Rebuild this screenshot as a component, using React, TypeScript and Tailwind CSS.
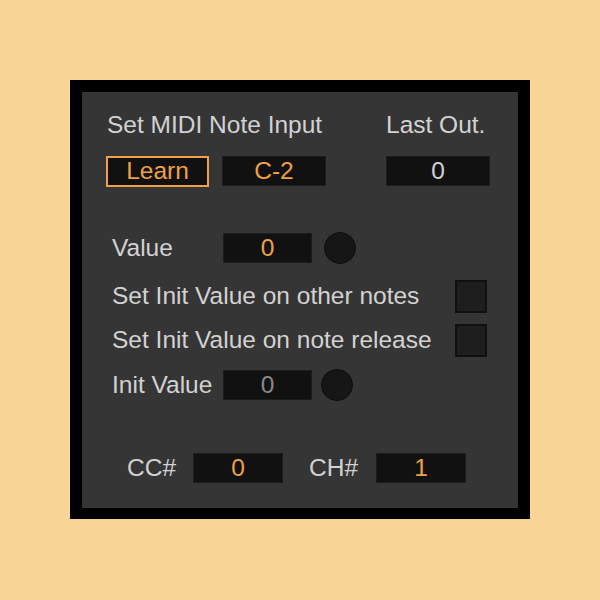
import React from "react";

const NumBox = ({ value, className, textClass }: { value: string; className?: string; textClass?: string }) => (
  <div
    className={`flex items-center justify-center bg-[#111111] border border-[#1c1c1c] ${className ?? ""}`}
  >
    <span className={textClass ?? "text-[#f0a045]"}>{value}</span>
  </div>
);

const Dot = () => <div className="w-[32px] h-[32px] rounded-full bg-[#161616] border border-[#0c0c0c]"></div>;

const Check = () => <div className="w-[32px] h-[33px] bg-[#1e1e1e] border-2 border-[#101010]"></div>;

export default function App() {
  return (
    <div
      className="w-[600px] h-[600px] bg-[#f8d597] pt-[80px] pl-[70px]"
      style={{ fontFamily: '"Liberation Sans", Arial, sans-serif' }}
    >
      <div className="w-[460px] h-[439px] bg-black p-[12px] pb-[11px]">
        <div className="w-full h-full bg-[#353535] text-[#d2d2d2] text-[24.5px] leading-none">
          {/* Header row */}
          <div className="flex pt-[21px] pl-[25px] h-[64px]">
            <div className="w-[279px]">Set MIDI Note Input</div>
            <div>Last Out.</div>
          </div>
          <div className="flex items-center pl-[24px] h-[30px]">
            <div className="w-[103px] h-[31px] flex items-center justify-center border-2 border-[#f0a045] bg-[#111111] text-[#f0a045]">
              Learn
            </div>
            <NumBox value="C-2" className="ml-[13px] w-[104px] h-[30px]" />
            <NumBox value="0" className="ml-[60px] w-[104px] h-[30px]" textClass="text-[#d2d2d2]" />
          </div>

          {/* Value */}
          <div className="flex items-center pl-[30px] mt-[46px] h-[32px]">
            <div className="w-[111px]">Value</div>
            <NumBox value="0" className="w-[89px] h-[30px]" />
            <div className="ml-[12px]">
              <Dot />
            </div>
          </div>

          <div className="flex items-center justify-between pl-[30px] pr-[31px] mt-[15px] h-[34px]">
            <div>Set Init Value on other notes</div>
            <Check />
          </div>
          <div className="flex items-center justify-between pl-[30px] pr-[31px] mt-[10px] h-[34px]">
            <div>Set Init Value on note release</div>
            <Check />
          </div>

          <div className="flex items-center pl-[30px] mt-[12px] h-[32px]">
            <div className="w-[111px]">Init Value</div>
            <NumBox value="0" className="w-[89px] h-[30px]" textClass="text-[#8a8a8a]" />
            <div className="ml-[9px]">
              <Dot />
            </div>
          </div>

          {/* CC / CH */}
          <div className="flex items-center pl-[45px] mt-[52px] h-[30px]">
            <div className="w-[66px]">CC#</div>
            <NumBox value="0" className="w-[90px] h-[30px]" />
            <div className="ml-[26px] w-[67px]">CH#</div>
            <NumBox value="1" className="w-[90px] h-[30px]" />
          </div>
        </div>
      </div>
    </div>
  );
}
